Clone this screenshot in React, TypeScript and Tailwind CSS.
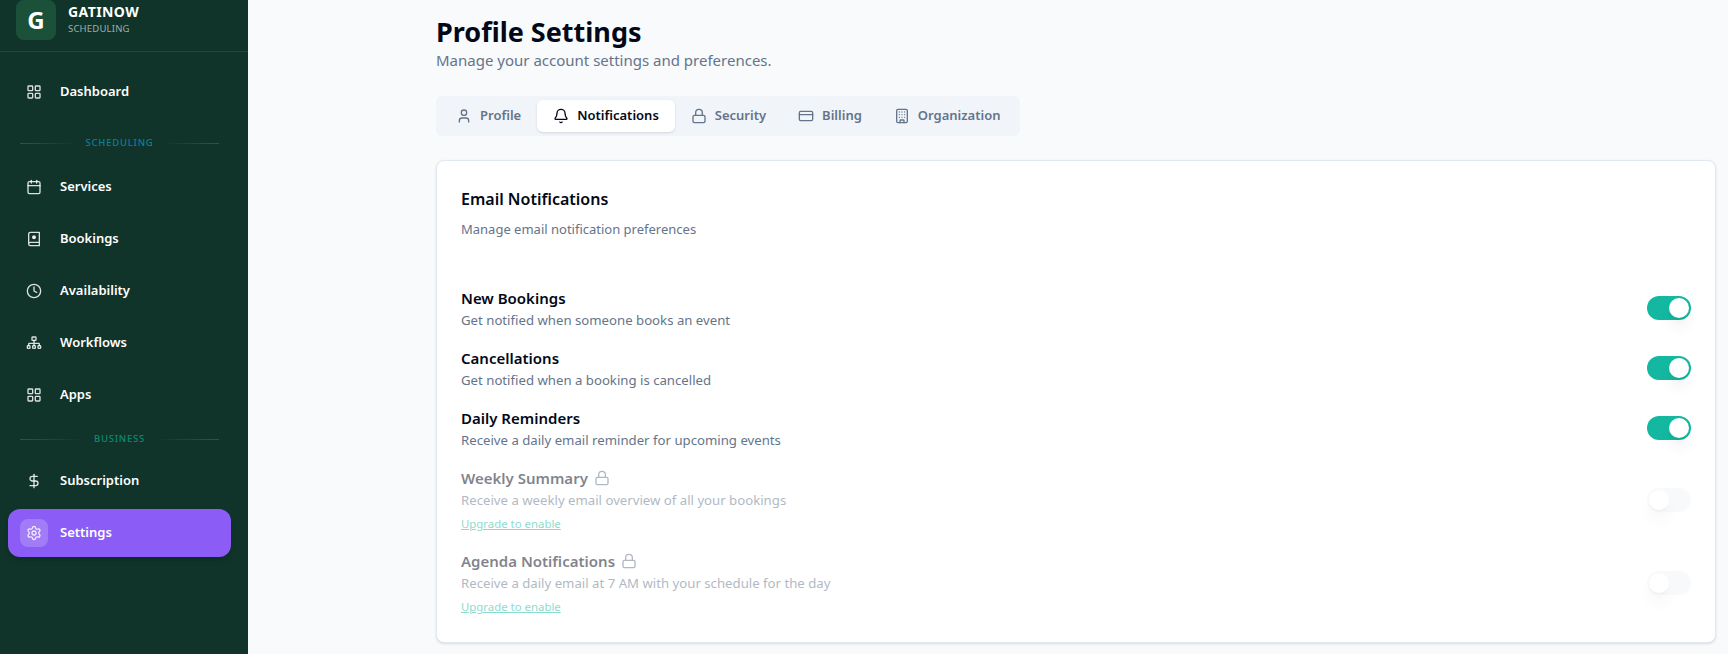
import {
  Bell,
  Building,
  Calendar,
  Clock,
  CreditCard,
  DollarSign,
  LayoutGrid,
  Lock,
  Settings,
  User,
} from "lucide-react";
import type { ComponentType } from "react";

type IconType = ComponentType<{ className?: string; strokeWidth?: number }>;

// sitemap with three boxes on the bottom row, lucide has no match for it
function SitemapIcon({ className }: { className?: string }) {
  return (
    <svg viewBox="0 0 24 24" fill="none" stroke="currentColor" strokeWidth="2" strokeLinecap="round" strokeLinejoin="round" className={className}>
      <rect x="9" y="3" width="6" height="5" rx="1" />
      <path d="M12 8v8M4 16v-2.5a1 1 0 0 1 1-1h14a1 1 0 0 1 1 1V16" />
      <rect x="2" y="16" width="4" height="4" rx="1" />
      <rect x="10" y="16" width="4" height="4" rx="1" />
      <rect x="18" y="16" width="4" height="4" rx="1" />
    </svg>
  );
}

// book with a dot on the cover
function BookDotIcon({ className }: { className?: string }) {
  return (
    <svg viewBox="0 0 24 24" fill="none" stroke="currentColor" strokeWidth="2" strokeLinecap="round" strokeLinejoin="round" className={className}>
      <path d="M4 19.5v-15A2.5 2.5 0 0 1 6.5 2H20v20H6.5a2.5 2.5 0 0 1 0-5H20" />
      <circle cx="12" cy="9.5" r="2" fill="currentColor" />
    </svg>
  );
}

function NavItem({ icon: Icon, label, active }: { icon: IconType; label: string; active?: boolean }) {
  return (
    <div
      className={`flex h-12 items-center rounded-xl px-3 text-[13px] font-semibold text-white ${
        active ? "bg-[#8b5cf6] shadow-md" : ""
      }`}
    >
      <span className={`mr-2 flex h-7 w-7 items-center justify-center rounded-lg ${active ? "bg-white/20" : ""}`}>
        <Icon className="h-4 w-4 text-white/85" />
      </span>
      <span className="ml-1">{label}</span>
    </div>
  );
}

function NavDivider({ label, color, className }: { label: string; color: string; className: string }) {
  return (
    <div className={`flex items-center gap-2 px-3 ${className}`}>
      <div className="h-px flex-1 bg-gradient-to-r from-[#15605a] to-transparent" />
      <span className={`text-[9.5px] leading-3 font-medium tracking-[0.08em] ${color}`}>{label}</span>
      <div className="h-px flex-1 bg-gradient-to-l from-[#15605a] to-transparent" />
    </div>
  );
}

function Sidebar() {
  return (
    <aside className="h-[654px] w-[248px] shrink-0 bg-[#10332a]">
      <div className="flex h-[52px] items-start gap-3 border-b border-[#1c4a3d] px-4">
        <div className="flex h-10 w-10 items-center justify-center rounded-lg bg-[#1b5139] text-[24px] font-bold text-white">
          G
        </div>
        <div className="pt-[2px]">
          <div className="text-[14px] leading-[20px] font-bold tracking-[0.03em] text-white">GATINOW</div>
          <div className="text-[9.5px] leading-[14px] tracking-[0.02em] text-white/60">SCHEDULING</div>
        </div>
      </div>
      <nav className="flex flex-col gap-1 pl-2 pr-[17px] pt-[16px]">
        <NavItem icon={LayoutGrid} label="Dashboard" />
        <NavDivider label="SCHEDULING" color="text-[#0b7fa0]" className="mt-[17px] mb-[10px]" />
        <NavItem icon={Calendar} label="Services" />
        <NavItem icon={BookDotIcon} label="Bookings" />
        <NavItem icon={Clock} label="Availability" />
        <NavItem icon={SitemapIcon} label="Workflows" />
        <NavItem icon={LayoutGrid} label="Apps" />
        <NavDivider label="BUSINESS" color="text-[#0d8a75]" className="mt-[10px] mb-[8px]" />
        <NavItem icon={DollarSign} label="Subscription" />
        <NavItem icon={Settings} label="Settings" active />
      </nav>
    </aside>
  );
}

function Tab({ icon: Icon, label, active }: { icon: IconType; label: string; active?: boolean }) {
  return (
    <div
      className={`flex h-8 items-center gap-2 rounded-md px-4 text-[13px] font-semibold ${
        active ? "bg-white text-[#020817] shadow-sm" : "text-[#64748b]"
      }`}
    >
      <Icon className="h-4 w-4" />
      {label}
    </div>
  );
}

function Toggle({ on, disabled }: { on?: boolean; disabled?: boolean }) {
  return (
    <div
      className={`flex h-6 w-11 shrink-0 items-center rounded-full px-0.5 ${on ? "justify-end bg-[#14b8a0]" : "bg-[#f1f5f9]"} ${
        disabled ? "opacity-50" : ""
      }`}
    >
      <div className="h-5 w-5 rounded-full bg-white shadow-lg" />
    </div>
  );
}

function Row({ title, desc, on, locked }: { title: string; desc: string; on?: boolean; locked?: boolean }) {
  return (
    <div className="flex items-center justify-between">
      <div className={locked ? "opacity-50" : ""}>
        <div className="flex items-center gap-1.5 text-[15px] leading-5 font-semibold text-[#020817]">
          {title}
          {locked && <Lock className="h-4 w-4 text-[#64748b]" />}
        </div>
        <div className="text-[13.2px] leading-[24px] text-[#64748b]">{desc}</div>
        {locked && (
          <div className="text-[11.4px] leading-[23px] text-[#14b8a0] underline">Upgrade to enable</div>
        )}
      </div>
      <div className="pb-1">
        <Toggle on={on} disabled={locked} />
      </div>
    </div>
  );
}

export default function App() {
  return (
    <div className="flex h-[654px] overflow-hidden bg-[#f8fafc] font-['Noto_Sans',sans-serif]">
      <Sidebar />
      <main className="min-w-0 flex-1 pl-[188px] pr-3">
        <h1 className="pt-[12px] text-[27px] leading-[40px] font-bold text-[#020817]">Profile Settings</h1>
        <p className="-mt-[4px] text-[15px] leading-[24px] text-[#64748b]">Manage your account settings and preferences.</p>
        <div className="mt-[24px] flex h-10 w-fit items-center rounded-md bg-[#f1f5f9] px-1">
          <Tab icon={User} label="Profile" />
          <Tab icon={Bell} label="Notifications" active />
          <Tab icon={Lock} label="Security" />
          <Tab icon={CreditCard} label="Billing" />
          <Tab icon={Building} label="Organization" />
        </div>
        <section className="mt-6 h-[483px] rounded-lg border border-[#e2e8f0] bg-white p-6 shadow-sm">
          <h2 className="text-[16px] leading-[28px] font-semibold text-[#020817]">Email Notifications</h2>
          <p className="mt-[6px] text-[13px] leading-5 text-[#64748b]">Manage email notification preferences</p>
          <div className="mt-[49px] flex flex-col gap-4">
            <Row title="New Bookings" desc="Get notified when someone books an event" on />
            <Row title="Cancellations" desc="Get notified when a booking is cancelled" on />
            <Row title="Daily Reminders" desc="Receive a daily email reminder for upcoming events" on />
            <Row title="Weekly Summary" desc="Receive a weekly email overview of all your bookings" locked />
            <Row title="Agenda Notifications" desc="Receive a daily email at 7 AM with your schedule for the day" locked />
          </div>
        </section>
      </main>
    </div>
  );
}
